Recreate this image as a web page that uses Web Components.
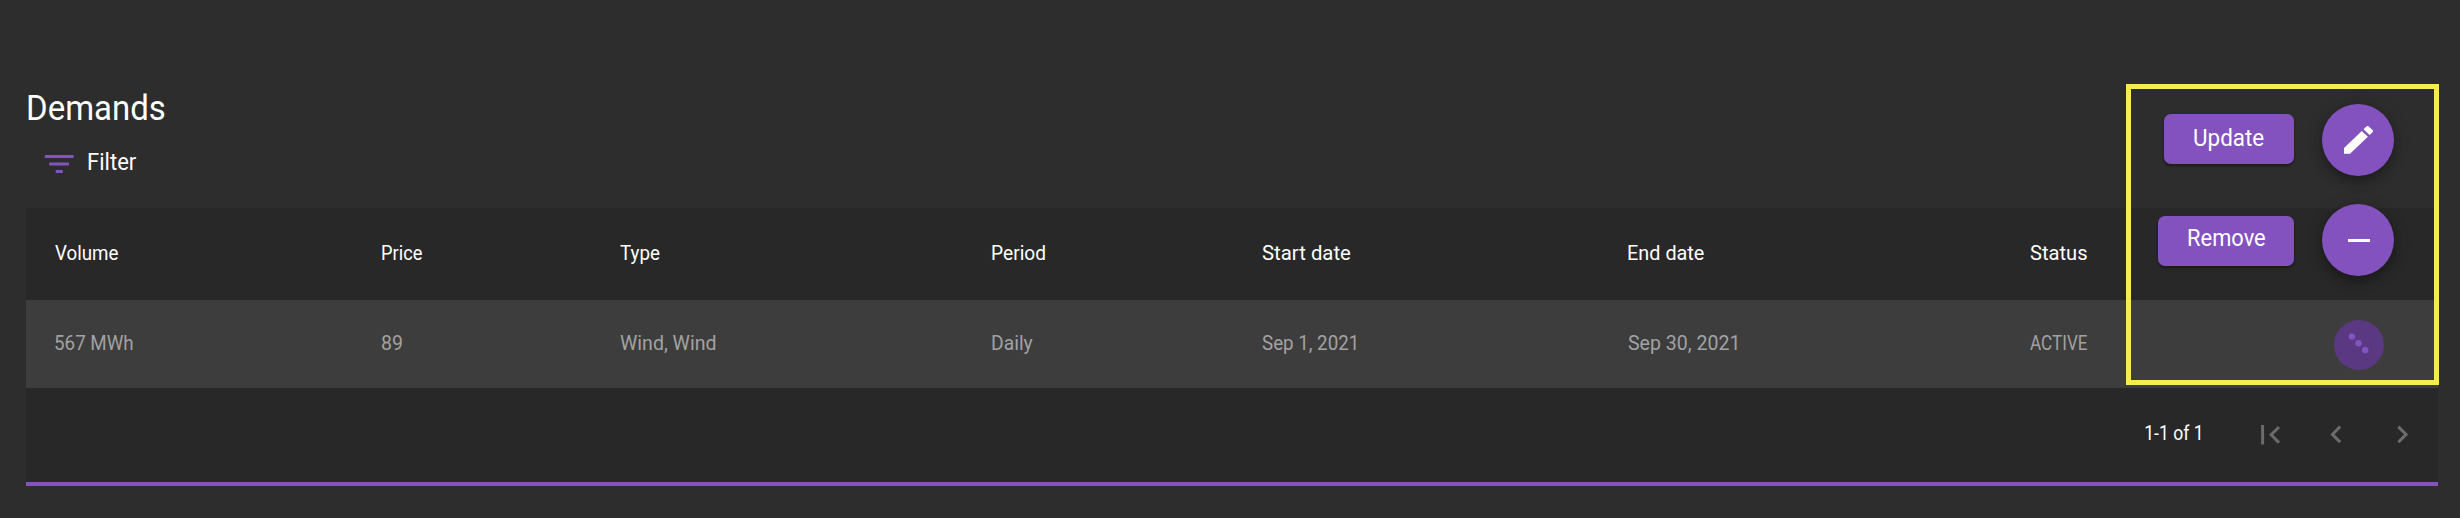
<!DOCTYPE html>
<html lang="en">
<head>
<meta charset="utf-8">
<title>Demands</title>
<style>
html,body{margin:0;height:100%;background:#2d2d2d;overflow:hidden}
body{font-family:Roboto,"Liberation Sans",sans-serif;color:#fff}
</style>
</head>
<body>
<demands-page></demands-page>
<script>
const mount = (el, html) => { el.attachShadow({mode:'open'}).innerHTML = html; };
const ctx = document.createElement('canvas').getContext('2d');

// Single line label, condensed so its glyphs span the given width.
customElements.define('fit-text', class extends HTMLElement {
  connectedCallback() {
    if (this.shadowRoot) return;
    const size = this.getAttribute('size') || 20.5;
    const weight = this.getAttribute('weight') || 400;
    const w = +this.getAttribute('w');
    mount(this, `<style>:host{display:block;width:${w}px;height:30px;flex:none}
      span{display:inline-block;white-space:nowrap;font-size:${size}px;font-weight:${weight};line-height:30px;transform-origin:0 0}</style><span><slot></slot></span>`);
    ctx.font = `${weight} ${size}px Roboto`;
    const m = ctx.measureText(this.textContent);
    const s = w / (m.actualBoundingBoxRight + m.actualBoundingBoxLeft);
    this.shadowRoot.querySelector('span').style.transform = `translateX(${m.actualBoundingBoxLeft * s}px) scaleX(${s})`;
  }
});

customElements.define('filter-toggle', class extends HTMLElement {
  connectedCallback() {
    mount(this, `<style>:host{display:flex;padding-left:18px;height:30px}
      svg{display:block;width:30px;height:30px;margin-right:13.5px}
      ::slotted(*){margin-top:1px}</style>
      <svg viewBox="0 0 30 30" fill="#8454be"><path d="M.8 8h28.8v3H.8zM5.3 15.4h19.6v3.1H5.3zM11.7 23h7v3h-7z"/></svg>
      <slot></slot>`);
  }
});

customElements.define('table-row', class extends HTMLElement {
  connectedCallback() {
    mount(this, `<style>:host{display:grid;grid-template-columns:327px 238px 372px 270px 366px 401.5px 1fr;box-sizing:border-box;padding:30px 0 0 29px;height:92px;color:#fff;background:#282828}
      :host([data]){height:88px;color:#a2a2a2;background:#3d3d3d;padding-top:28px}</style><slot></slot>`);
  }
});

customElements.define('table-pager', class extends HTMLElement {
  connectedCallback() {
    mount(this, `<style>:host{display:flex;justify-content:flex-end;box-sizing:border-box;height:98px;padding:30px 29px 0 0;background:#282828;border-bottom:4px solid #8454be}
      svg{display:block;height:20px;margin-top:7px;fill:none;stroke:#6b6b6b;stroke-width:3}
      .first{width:20px;margin-left:60.5px}.prev{width:12px;margin-left:49px}.next{width:12px;margin-left:55px}</style>
      <slot></slot>
      <svg class="first" viewBox="0 0 20 20"><path d="M1.6 0v19.5M18 2l-7.8 7.8 7.8 7.8"/></svg>
      <svg class="prev" viewBox="0 0 12 20"><path d="M10.2 1.6L2.4 9.4l7.8 7.8"/></svg>
      <svg class="next" viewBox="0 0 12 20"><path d="M1.3 1.6l7.8 7.8-7.8 7.8"/></svg>`);
  }
});

customElements.define('action-label', class extends HTMLElement {
  connectedCallback() {
    mount(this, `<style>:host{display:block;box-sizing:border-box;height:50px;border-radius:7px;background:#8352bf;color:#fff;box-shadow:0 2px 3px rgba(0,0,0,.4);padding:10px 0 0 29.5px}</style><slot></slot>`);
  }
});

customElements.define('round-action', class extends HTMLElement {
  connectedCallback() {
    const icons = {
      edit: '<svg style="left:22.3px;top:22.3px;width:29px;height:27.7px" viewBox="3 3 18 18" preserveAspectRatio="none"><path d="M3 17.25V21h3.75L17.81 9.94l-3.75-3.75L3 17.25zM20.71 7.04c.39-.39.39-1.02 0-1.41l-2.34-2.34a.996.996 0 0 0-1.41 0l-1.83 1.83 3.75 3.75 1.83-1.83z"/></svg>',
      remove: '<svg style="left:26px;top:34.7px;width:22px;height:3.3px" viewBox="0 0 22 3.3"><path d="M0 0h22v3.3H0z"/></svg>',
      more: '<svg style="left:0;top:0;width:50px;height:50px" viewBox="0 0 50 50" fill="#8353c3"><circle cx="17.8" cy="16.6" r="3.2"/><circle cx="24.5" cy="23.3" r="3.2"/><circle cx="31.2" cy="30" r="3.2"/></svg>'
    };
    mount(this, `<style>:host{display:block;position:relative;width:72px;height:72px;border-radius:50%;background:#8352bf;box-shadow:0 6px 10px rgba(0,0,0,.24),0 2px 18px rgba(0,0,0,.16)}
      :host([icon=more]){width:50px;height:50px;background:#5b3882;box-shadow:none}
      svg{position:absolute;display:block}svg:not([fill]){fill:#fff}</style>${icons[this.getAttribute('icon')]}`);
  }
});

// Speed-dial menu that floats over the table.
customElements.define('action-menu', class extends HTMLElement {
  connectedCallback() {
    mount(this, `<style>:host{position:absolute;left:2126px;top:84px;box-sizing:border-box;width:313px;height:301px;border:5px solid #f6ed4c;padding-top:15px}
      .line{display:flex;justify-content:flex-end;align-items:flex-start;gap:28px;padding-right:40px;height:100px}
      .line:nth-of-type(3){padding:16px 50px 0 0;height:50px}
      .u{width:130px;margin-top:10px}.r{width:136px;margin-top:12px;padding-top:8px}</style>
      <div class="line"><action-label class="u"><fit-text size="23" w="70">Update</fit-text></action-label><round-action icon="edit"></round-action></div>
      <div class="line"><action-label class="r"><fit-text size="23" w="77.5">Remove</fit-text></action-label><round-action icon="remove"></round-action></div>
      <div class="line"><round-action icon="more"></round-action></div>`);
  }
});

customElements.define('demands-page', class extends HTMLElement {
  connectedCallback() {
    mount(this, `<style>:host{display:block;position:relative;box-sizing:border-box;height:518px;padding:93px 22px 0 26px}
      .title{padding-left:1.5px;height:54px}.filter{height:61px}</style>
      <div class="title"><fit-text size="34.5" w="137">Demands</fit-text></div>
      <filter-toggle class="filter"><fit-text size="23" w="48.5">Filter</fit-text></filter-toggle>
      <table-row><fit-text w="63.5">Volume</fit-text><fit-text w="40.5">Price</fit-text><fit-text w="40">Type</fit-text><fit-text w="53.5">Period</fit-text><fit-text w="89">Start date</fit-text><fit-text w="76.5">End date</fit-text><fit-text w="57">Status</fit-text></table-row>
      <table-row data><fit-text w="77.5">567 MWh</fit-text><fit-text w="20.5">89</fit-text><fit-text w="96">Wind, Wind</fit-text><fit-text w="41">Daily</fit-text><fit-text w="94">Sep 1, 2021</fit-text><fit-text w="109">Sep 30, 2021</fit-text><fit-text w="57">ACTIVE</fit-text></table-row>
      <table-pager><fit-text w="55.5">1-1 of 1</fit-text></table-pager>
      <action-menu></action-menu>`);
  }
});
</script>
</body>
</html>
